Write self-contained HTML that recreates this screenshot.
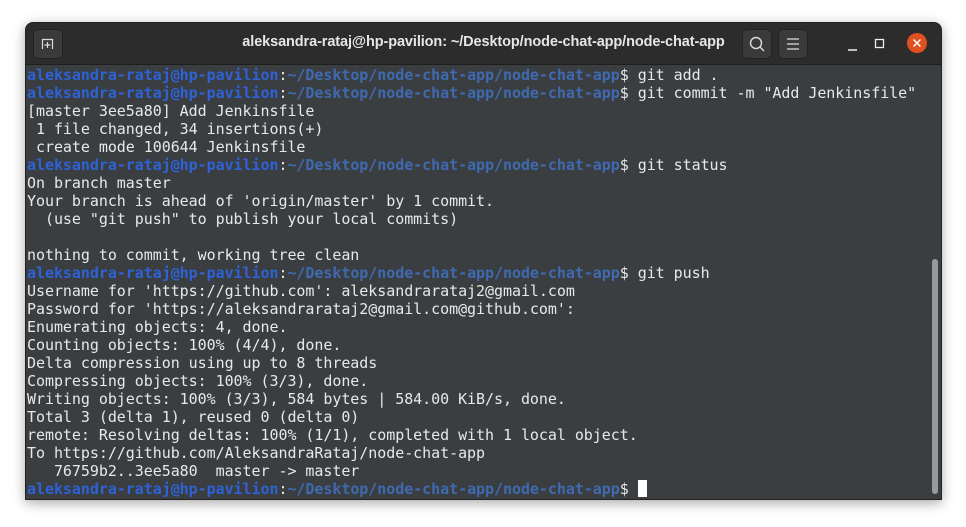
<!DOCTYPE html>
<html><head><meta charset="utf-8"><style>
body{margin:0;width:966px;height:527px;background:#fff;overflow:hidden;position:relative;font-family:"Liberation Sans",sans-serif}
.win{position:absolute;left:25px;top:22px;width:915px;height:476px;background:#3a3e41;border-radius:8px 8px 0 0;overflow:hidden;box-shadow:0 3px 12px rgba(0,0,0,.35);border:1px solid #222}
.tb{position:absolute;left:0;top:0;width:100%;height:41px;background:#2c2c2c;border-bottom:1px solid #1e1e1e}
.title{position:absolute;left:0;right:0;top:11px;text-align:center;color:#e6e6e6;font-weight:bold;font-size:14.5px;letter-spacing:-0.1px}
.btn{position:absolute;top:6px;width:28px;height:28px;background:#3a3a3a;border-radius:5px;border:1px solid #222}
.term{position:absolute;left:1px;top:43px;font-family:"DejaVu Sans Mono","Liberation Mono",monospace;font-size:15px;line-height:18px;color:#e8e8e8;white-space:pre;letter-spacing:-0.05px}
.u{color:#2e62d6;font-weight:bold}.p{color:#3f6ab0;font-weight:bold}
.cur{display:inline-block;width:9px;height:17px;background:#fff;vertical-align:-3px}
.sb{position:absolute;left:906px;top:236px;width:6px;height:235px;background:#9a9a9a;border-radius:3px}
</style></head><body>
<div class="win">
<div class="tb">
<div class="btn" style="left:7px"><svg width="28" height="28"><path d="M8.5 19V9.5h10V19" fill="none" stroke="#ddd" stroke-width="1.2"/><path d="M13.5 12v6M10.5 15h6" stroke="#ddd" stroke-width="1.2"/></svg></div>
<div class="title">aleksandra-rataj@hp-pavilion: ~/Desktop/node-chat-app/node-chat-app</div>
<div class="btn" style="left:716px"><svg width="28" height="28"><circle cx="13" cy="13" r="5.5" fill="none" stroke="#ddd" stroke-width="1.4"/><path d="M17 17l4 4" stroke="#ddd" stroke-width="1.4"/></svg></div>
<div class="btn" style="left:752px"><svg width="28" height="28"><path d="M8 9h12M8 14h12M8 19h12" stroke="#ddd" stroke-width="1.2"/></svg></div>
<svg style="position:absolute;left:818px;top:12px" width="20" height="20"><path d="M4 15h9" stroke="#eee" stroke-width="1.4"/></svg>
<svg style="position:absolute;left:845px;top:12px" width="20" height="20"><rect x="4.5" y="4.5" width="8" height="8" fill="none" stroke="#eee" stroke-width="1.3"/></svg>
<div style="position:absolute;left:881px;top:10px;width:20px;height:20px;border-radius:50%;background:#e05020"><svg width="20" height="20"><path d="M6.5 6.5l7 7M13.5 6.5l-7 7" stroke="#fff" stroke-width="1.5"/></svg></div>
</div>
<div class="term"><span class="u">aleksandra-rataj@hp-pavilion</span>:<span class="p">~/Desktop/node-chat-app/node-chat-app</span>$ git add .
<span class="u">aleksandra-rataj@hp-pavilion</span>:<span class="p">~/Desktop/node-chat-app/node-chat-app</span>$ git commit -m "Add Jenkinsfile"
[master 3ee5a80] Add Jenkinsfile
 1 file changed, 34 insertions(+)
 create mode 100644 Jenkinsfile
<span class="u">aleksandra-rataj@hp-pavilion</span>:<span class="p">~/Desktop/node-chat-app/node-chat-app</span>$ git status
On branch master
Your branch is ahead of 'origin/master' by 1 commit.
  (use "git push" to publish your local commits)

nothing to commit, working tree clean
<span class="u">aleksandra-rataj@hp-pavilion</span>:<span class="p">~/Desktop/node-chat-app/node-chat-app</span>$ git push
Username for 'https://github.com': aleksandrarataj2@gmail.com
Password for 'https://aleksandrarataj2@gmail.com@github.com':
Enumerating objects: 4, done.
Counting objects: 100% (4/4), done.
Delta compression using up to 8 threads
Compressing objects: 100% (3/3), done.
Writing objects: 100% (3/3), 584 bytes | 584.00 KiB/s, done.
Total 3 (delta 1), reused 0 (delta 0)
remote: Resolving deltas: 100% (1/1), completed with 1 local object.
To https://github.com/AleksandraRataj/node-chat-app
   76759b2..3ee5a80  master -&gt; master
<span class="u">aleksandra-rataj@hp-pavilion</span>:<span class="p">~/Desktop/node-chat-app/node-chat-app</span>$ <span class="cur"></span></div>
<div class="sb"></div>
</div>
</body></html>
